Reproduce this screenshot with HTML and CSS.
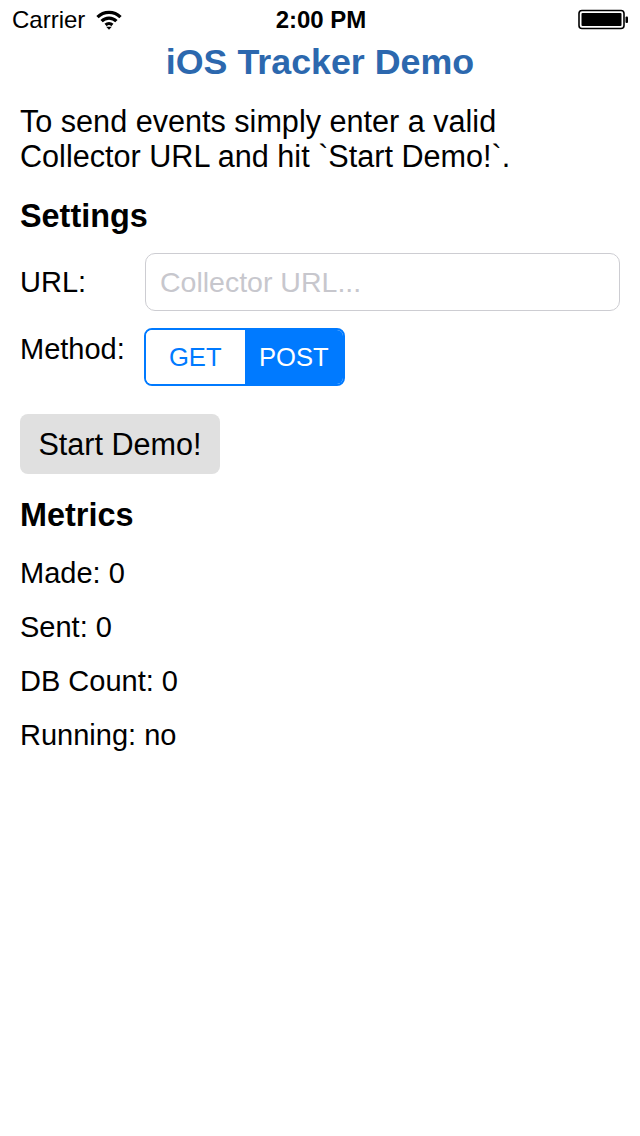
FILE: index.html
```html
<!DOCTYPE html>
<html>
<head>
<meta charset="utf-8">
<link rel="stylesheet" href="styles.css">
</head>
<body>
<div class="status">
  <div class="status-left">
    <span class="carrier">Carrier</span>
    <svg class="wifi" width="26" height="20" viewBox="0 0 26 20">
      <path d="M1.5 7.2 A16 16 0 0 1 24.5 7.2" fill="none" stroke="#000" stroke-width="3.2"/>
      <path d="M5.6 11.2 A10.3 10.3 0 0 1 20.4 11.2" fill="none" stroke="#000" stroke-width="3.2"/>
      <path d="M9.6 15 A5 5 0 0 1 16.4 15" fill="none" stroke="#000" stroke-width="3.2"/>
      <path d="M10.2 16.8 L15.8 16.8 L13 19.8 Z" fill="#000"/>
    </svg>
  </div>
  <div class="time">2:00 PM</div>
  <div class="status-right">
    <svg class="battery" width="52" height="22" viewBox="0 0 52 22">
      <rect x="1" y="1.5" width="45" height="18" rx="3" fill="none" stroke="#000" stroke-width="1.6"/>
      <rect x="3.5" y="4" width="40" height="13" rx="1" fill="#000"/>
      <rect x="47.5" y="7.5" width="2.5" height="6.5" rx="1" fill="#000"/>
    </svg>
  </div>
</div>

<main class="content">
  <h1 class="title">iOS Tracker Demo</h1>
  <p class="intro">To send events simply enter a valid Collector URL and hit `Start Demo!`.</p>

  <h2 class="heading settings">Settings</h2>

  <div class="row url-row">
    <span class="label">URL:</span>
    <div class="field"><span class="placeholder">Collector URL...</span></div>
  </div>

  <div class="row method-row">
    <span class="label method-label">Method:</span>
    <div class="segmented">
      <span class="seg seg-off">GET</span>
      <span class="seg seg-on">POST</span>
    </div>
  </div>

  <button class="start">Start Demo!</button>

  <h2 class="heading metrics">Metrics</h2>
  <ul class="stats">
    <li>Made: 0</li>
    <li>Sent: 0</li>
    <li>DB Count: 0</li>
    <li>Running: no</li>
  </ul>
</main>
</body>
</html>
```

FILE: styles.css
```css
* { box-sizing: border-box; }
html, body {
  margin: 0;
  padding: 0;
  background: #fff;
  width: 640px;
  height: 1136px;
  overflow: hidden;
}
body {
  font-family: "Liberation Sans", Arial, sans-serif;
  color: #000;
}

.status {
  height: 40px;
  display: grid;
  grid-template-columns: 1fr auto 1fr;
  align-items: center;
  padding: 0 10px 0 12px;
}
.status-left {
  display: flex;
  align-items: center;
  gap: 11px;
}
.carrier {
  font-size: 24px;
  line-height: 40px;
}
.time {
  font-size: 24px;
  font-weight: 700;
  line-height: 40px;
}
.status-right {
  display: flex;
  justify-content: flex-end;
}

.content {
  padding: 0 20px;
}
.title {
  margin: 0;
  text-align: center;
  font-size: 35.8px;
  line-height: 44px;
  font-weight: 700;
  color: #2c68ae;
}
.intro {
  margin: 20px 0 0;
  font-size: 30.6px;
  line-height: 35px;
  width: 540px;
}
.heading {
  margin: 22px 0 0;
  font-size: 32.4px;
  line-height: 40px;
  font-weight: 700;
}
.row {
  display: flex;
}
.label {
  width: 125px;
  flex: none;
  font-size: 29px;
}
.url-row {
  margin-top: 17px;
  height: 58px;
  align-items: center;
}
.url-row .label { line-height: 58px; }
.field {
  width: 475px;
  height: 58px;
  border: 1.5px solid #cdcdd2;
  border-radius: 10px;
  display: flex;
  align-items: center;
  padding-left: 14px;
}
.placeholder {
  font-size: 28.5px;
  color: #c7c7cd;
}
.method-row {
  margin-top: 17px;
  align-items: flex-start;
}
.method-label { line-height: 42px; }
.segmented {
  display: flex;
  width: 201px;
  height: 58px;
  border: 2px solid #007aff;
  border-radius: 8px;
  overflow: hidden;
  margin-left: -1px;
}
.seg {
  flex: 1;
  display: flex;
  align-items: center;
  justify-content: center;
  font-size: 25.6px;
}
.seg-off { color: #007aff; background: #fff; }
.seg-on { color: #fff; background: #007aff; }

.start {
  display: block;
  margin-top: 28px;
  width: 200px;
  height: 60px;
  border: 0;
  border-radius: 8px;
  background: #e0e0e0;
  font-family: "Liberation Sans", Arial, sans-serif;
  font-size: 30.6px;
  color: #000;
  padding: 0;
}
.metrics { margin-top: 21px; }
.stats {
  list-style: none;
  margin: 11px 0 0;
  padding: 0;
}
.stats li {
  font-size: 29px;
  line-height: 54px;
}
```
